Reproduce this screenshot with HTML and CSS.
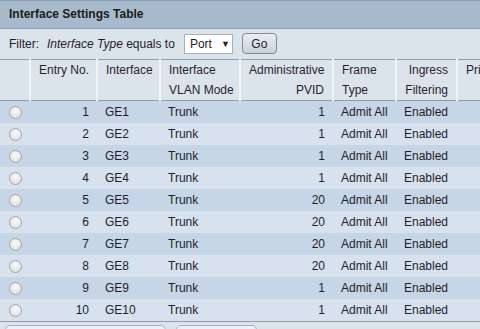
FILE: index.html
```html
<!DOCTYPE html>
<html>
<head>
<meta charset="utf-8">
<link rel="stylesheet" href="styles.css">
</head>
<body>
<div class="panel">
  <div class="title">Interface Settings Table</div>
  <div class="filter">
    <span class="lbl">Filter:</span>
    <span class="crit"><i>Interface Type</i> equals to</span>
    <span class="select">Port <span class="arrow">▼</span></span>
    <button class="go">Go</button>
  </div>
  <table class="grid">
    <colgroup>
      <col class="c0"><col class="c1"><col class="c2"><col class="c3"><col class="c4"><col class="c5"><col class="c6"><col class="c7">
    </colgroup>
    <thead>
      <tr>
        <th></th>
        <th class="r">Entry No.</th>
        <th>Interface</th>
        <th>Interface<br>VLAN Mode</th>
        <th class="r">Administrative<br>PVID</th>
        <th>Frame<br>Type</th>
        <th class="r">Ingress<br>Filtering</th>
        <th>Priority</th>
      </tr>
    </thead>
    <tbody>
      <tr><td><span class="radio"></span></td><td class="r">1</td><td>GE1</td><td>Trunk</td><td class="r">1</td><td>Admit All</td><td>Enabled</td><td></td></tr>
      <tr><td><span class="radio"></span></td><td class="r">2</td><td>GE2</td><td>Trunk</td><td class="r">1</td><td>Admit All</td><td>Enabled</td><td></td></tr>
      <tr><td><span class="radio"></span></td><td class="r">3</td><td>GE3</td><td>Trunk</td><td class="r">1</td><td>Admit All</td><td>Enabled</td><td></td></tr>
      <tr><td><span class="radio"></span></td><td class="r">4</td><td>GE4</td><td>Trunk</td><td class="r">1</td><td>Admit All</td><td>Enabled</td><td></td></tr>
      <tr><td><span class="radio"></span></td><td class="r">5</td><td>GE5</td><td>Trunk</td><td class="r">20</td><td>Admit All</td><td>Enabled</td><td></td></tr>
      <tr><td><span class="radio"></span></td><td class="r">6</td><td>GE6</td><td>Trunk</td><td class="r">20</td><td>Admit All</td><td>Enabled</td><td></td></tr>
      <tr><td><span class="radio"></span></td><td class="r">7</td><td>GE7</td><td>Trunk</td><td class="r">20</td><td>Admit All</td><td>Enabled</td><td></td></tr>
      <tr><td><span class="radio"></span></td><td class="r">8</td><td>GE8</td><td>Trunk</td><td class="r">20</td><td>Admit All</td><td>Enabled</td><td></td></tr>
      <tr><td><span class="radio"></span></td><td class="r">9</td><td>GE9</td><td>Trunk</td><td class="r">1</td><td>Admit All</td><td>Enabled</td><td></td></tr>
      <tr><td><span class="radio"></span></td><td class="r">10</td><td>GE10</td><td>Trunk</td><td class="r">1</td><td>Admit All</td><td>Enabled</td><td></td></tr>
    </tbody>
  </table>
  <div class="actions">
    <span class="btn b1"></span>
    <span class="btn b2"></span>
  </div>
</div>
</body>
</html>
```
FILE: styles.css
```css
html, body {
  margin: 0;
  padding: 0;
  width: 480px;
  height: 329px;
  overflow: hidden;
  background: #dbe3eb;
}
body {
  font-family: "Liberation Sans", Arial, sans-serif;
  font-size: 12px;
  color: #1e1e2a;
}
.panel {
  width: 560px;
}
.title {
  height: 27px;
  line-height: 27px;
  background: #a6bacb;
  border-top: 1px solid #8c9fb0;
  border-bottom: 1px solid #8c9fb0;
  padding-left: 9px;
  font-weight: bold;
  color: #1a1a22;
}
.filter {
  height: 30px;
  display: flex;
  align-items: center;
  padding-left: 9px;
  background: #dbe3eb;
}
.lbl { margin-right: 8px; }
.crit i { font-style: italic; }
.select {
  margin-left: 9px;
  width: 40px;
  height: 18px;
  line-height: 18px;
  background: #fff;
  border: 1px solid #a7b1bb;
  padding-left: 5px;
  font-size: 12px;
  display: flex;
  align-items: center;
  justify-content: space-between;
  padding-right: 2px;
}
.arrow { font-size: 9px; }
.go {
  margin-left: 9px;
  width: 35px;
  height: 21px;
  border: 1px solid #7e8a96;
  border-radius: 4px;
  background: linear-gradient(#e9eef3, #c8d3dd);
  font-family: "Liberation Sans", Arial, sans-serif;
  font-size: 12px;
  color: #1e1e2a;
  padding: 0;
  margin-top: -1px;
}
.grid {
  border-collapse: collapse;
  table-layout: fixed;
  width: 560px;
}
.c0 { width: 30px; }
.c1 { width: 67px; }
.c2 { width: 63px; }
.c3 { width: 80px; }
.c4 { width: 93px; }
.c5 { width: 63px; }
.c6 { width: 61px; }
.c7 { width: 103px; }
.grid thead tr {
  border-top: 1px solid #8f9eac;
  border-bottom: 1px solid #8f9eac;
}
.grid th {
  height: 40px;
  padding: 0 8px;
  font-weight: normal;
  text-align: left;
  vertical-align: top;
  line-height: 20px;
  background: #dbe3eb;
  border-left: 2px solid #f1f4f7;
  white-space: nowrap;
  color: #2a1e2e;
}
.grid th:first-child { border-left: none; }
.grid th.r { text-align: right; }
.grid td {
  height: 22px;
  padding: 0 8px;
  line-height: 22px;
  white-space: nowrap;
}
.grid td.r { text-align: right; }
.grid tbody tr:nth-child(odd) { background: #c6d6e7; }
.grid tbody tr:nth-child(even) { background: #d7e2ee; }
.grid tbody tr:last-child { border-bottom: 1px solid #8f9eac; }
.grid td:first-child { padding: 0 0 0 9px; }
.radio {
  display: block;
  width: 11px;
  height: 11px;
  border-radius: 50%;
  border: 1px solid #a3a3a3;
  background: radial-gradient(circle at 50% 35%, #fafafa, #d9d9d9);
}
.actions {
  display: flex;
  gap: 10px;
  padding: 3px 0 0 5px;
}
.btn {
  display: block;
  height: 20px;
  border: 1px solid #a8b2bc;
  border-radius: 5px;
  background: #edf1f5;
}
.b1 { width: 159px; }
.b2 { width: 79px; }
```
